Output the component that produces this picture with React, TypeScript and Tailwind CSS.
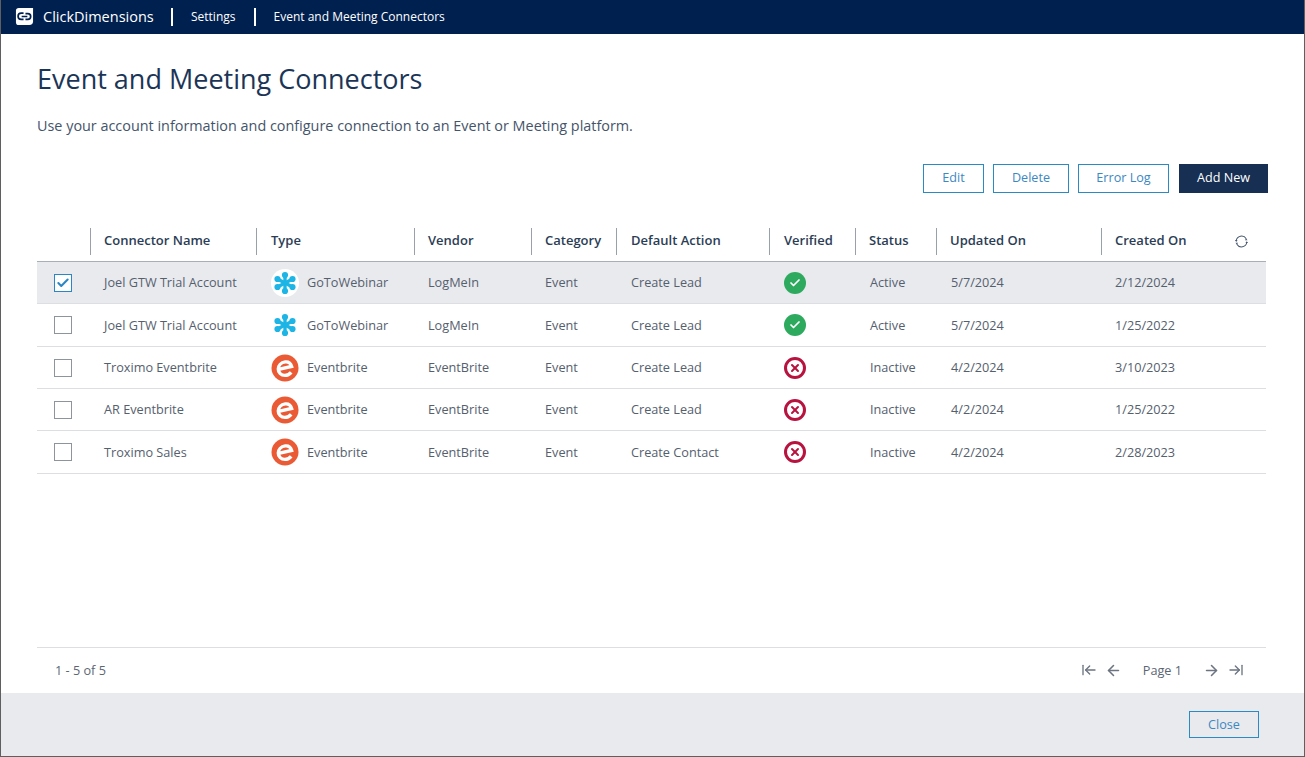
import { ArrowLeft, ArrowLeftToLine, ArrowRight, ArrowRightToLine, Check, X } from "lucide-react";

type Row = {
  name: string;
  type: "GoToWebinar" | "Eventbrite";
  vendor: string;
  action: string;
  verified: boolean;
  updated: string;
  created: string;
  selected?: boolean;
  height: string;
};

const rows: Row[] = [
  { name: "Joel GTW Trial Account", type: "GoToWebinar", vendor: "LogMeIn", action: "Create Lead", verified: true, updated: "5/7/2024", created: "2/12/2024", selected: true, height: "h-[42px]" },
  { name: "Joel GTW Trial Account", type: "GoToWebinar", vendor: "LogMeIn", action: "Create Lead", verified: true, updated: "5/7/2024", created: "1/25/2022", height: "h-[43px]" },
  { name: "Troximo Eventbrite", type: "Eventbrite", vendor: "EventBrite", action: "Create Lead", verified: false, updated: "4/2/2024", created: "3/10/2023", height: "h-[42px]" },
  { name: "AR Eventbrite", type: "Eventbrite", vendor: "EventBrite", action: "Create Lead", verified: false, updated: "4/2/2024", created: "1/25/2022", height: "h-[42px]" },
  { name: "Troximo Sales", type: "Eventbrite", vendor: "EventBrite", action: "Create Contact", verified: false, updated: "4/2/2024", created: "2/28/2023", height: "h-[43px]" },
];

const columns = "grid grid-cols-[53px_166px_158px_117px_85px_153px_86px_81px_165px_165px]";

const headers = [
  { label: "Connector Name", pad: "pl-[13px]" },
  { label: "Type", pad: "pl-[14px]" },
  { label: "Vendor", pad: "pl-[13px]" },
  { label: "Category", pad: "pl-[13px]" },
  { label: "Default Action", pad: "pl-[14px]" },
  { label: "Verified", pad: "pl-[14px]" },
  { label: "Status", pad: "pl-[13px]" },
  { label: "Updated On", pad: "pl-[13px]" },
  { label: "Created On", pad: "pl-[13px]" },
];

const GoToIcon = () => (
  <svg viewBox="0 0 28 28" className="w-7 h-7 rounded-full bg-white shrink-0">
    <g stroke="#1cb5e5" strokeWidth="3.4">
      <line x1="14" y1="6" x2="14" y2="22" />
      <line x1="6.5" y1="10" x2="21.5" y2="18" />
      <line x1="21.5" y1="10" x2="6.5" y2="18" />
    </g>
    <g fill="#1cb5e5">
      <circle cx="14" cy="6" r="3.1" />
      <circle cx="14" cy="22" r="3.1" />
      <circle cx="6.5" cy="10" r="3.1" />
      <circle cx="21.5" cy="10" r="3.1" />
      <circle cx="6.5" cy="18" r="3.1" />
      <circle cx="21.5" cy="18" r="3.1" />
    </g>
  </svg>
);

const EventbriteIcon = () => (
  <svg viewBox="0 0 28 28" className="w-7 h-7 shrink-0">
    <circle cx="14" cy="14" r="13.5" fill="#ea5a35" />
    <path d="M6.5 15.6 L20.6 12.4 C19.6 9 16.9 7.6 14.2 7.9 C10 8.4 7.4 11.5 7.3 15 C7.2 18.8 10.2 21.4 14 21.4 C16.7 21.4 18.6 20.3 20.2 18.4" fill="none" stroke="#fff" strokeWidth="3.4" />
  </svg>
);

const RefreshIcon = () => (
  <svg viewBox="0 0 16 16" className="w-[15px] h-[15px] mr-[17px] text-[#46566b]" fill="none" stroke="currentColor" strokeWidth="1.1">
    <path d="M2.3 7.2 A5.8 5.8 0 0 1 13 5" />
    <path d="M13.7 8.8 A5.8 5.8 0 0 1 3 11" />
    <path d="M11.6 6.6 H14.4 L13 4.8 Z M1 6.4 H3.8 L2.4 8.4 Z M4.4 9.4 H1.6 L3 11.2 Z M15 9.6 H12.2 L13.6 7.6 Z" fill="currentColor" stroke="none" />
  </svg>
);

const Verified = ({ ok }: { ok: boolean }) =>
  ok ? (
    <span className="w-[22px] h-[22px] rounded-full bg-[#2eaa5f] flex items-center justify-center">
      <Check className="w-3 h-3 text-white" strokeWidth={3.5} />
    </span>
  ) : (
    <span className="w-[22px] h-[22px] rounded-full border-[3px] border-[#b8123f] flex items-center justify-center">
      <X className="w-3 h-3 text-[#b8123f]" strokeWidth={4} />
    </span>
  );

const OutlineButton = ({ label, width }: { label: string; width: string }) => (
  <button className={`${width} h-[29px] pb-[1px] border border-[#2a8ac4] text-[#3b88c3] text-[12.6px] bg-white`}>{label}</button>
);

export default function App() {
  return (
    <div className="h-[757px] w-[1305px] flex flex-col bg-white border-l border-r border-b border-[#5f5f5f] font-['Open_Sans',sans-serif] overflow-hidden">
      <div className="h-[34px] shrink-0 bg-[#002050] flex items-center text-white">
        <svg viewBox="0 0 20 20" className="w-[19px] h-[19px] ml-[14px] mb-[1px]">
          <path d="M4 1 H19 V15 A4 4 0 0 1 15 19 H4 A3 3 0 0 1 1 16 V4 A3 3 0 0 1 4 1 Z" fill="#fff" />
          <path d="M9 6.5 H6.5 A3.2 3.2 0 0 0 6.5 13 H9 M11 7 H13.5 A3 3 0 0 1 13.5 13 H11 M7 10 H13" fill="none" stroke="#002050" strokeWidth="1.8" />
        </svg>
        <span className="ml-[9px] text-[14.5px] w-[111px] mb-[1px]">ClickDimensions</span>
        <span className="w-[2px] h-[18px] bg-white ml-[17px]" />
        <span className="ml-[18px] text-[12px] mb-[1px]">Settings</span>
        <span className="w-[2px] h-[18px] bg-white ml-[18px]" />
        <span className="ml-[18px] text-[12px] mb-[1px]">Event and Meeting Connectors</span>
      </div>

      <div className="flex-1 flex flex-col pl-[36px] pr-[38px] min-h-0">
        <h1 className="mt-[27px] text-[27px] leading-[36px] text-[#1b3556]">Event and Meeting Connectors</h1>
        <p className="mt-[19px] text-[14.4px] leading-[20px] text-[#44546a]">
          Use your account information and configure connection to an Event or Meeting platform.
        </p>

        <div className="mt-[28px] flex justify-end gap-[9px] -mr-[2px]">
          <OutlineButton label="Edit" width="w-[61px]" />
          <OutlineButton label="Delete" width="w-[76px]" />
          <OutlineButton label="Error Log" width="w-[91px]" />
          <button className="w-[89px] h-[29px] pb-[1px] ml-[1px] bg-[#162f52] text-white text-[12.6px]">Add New</button>
        </div>

        <div className={`${columns} mt-[27px] h-[42px] border-b border-[#a9afb8] items-center`}>
          <div />
          {headers.map((h, i) => (
            <div key={h.label} className={`h-[27px] mt-[1px] border-l border-[#98a0ab] ${h.pad} flex items-center justify-between text-[13px] font-semibold text-[#2b3d55]`}>
              {h.label}
              {i === headers.length - 1 && <RefreshIcon />}
            </div>
          ))}
        </div>

        {rows.map((r, i) => (
          <div key={i} className={`${columns} ${r.height} border-b border-[#dcdee2] items-center text-[12.7px] leading-[19px] text-[#55606e] ${r.selected ? "bg-[#e9eaee]" : ""}`}>
            <div className="pl-[17px] flex">
              {r.selected ? (
                <span className="w-[18px] h-[18px] border-[1.5px] border-[#2b86c5] bg-white flex items-center justify-center">
                  <Check className="w-[14px] h-[14px] text-[#2b86c5]" strokeWidth={3.5} />
                </span>
              ) : (
                <span className="w-[18px] h-[18px] border border-[#8e949c] bg-white" />
              )}
            </div>
            <div className="pl-[14px]">{r.name}</div>
            <div className="pl-[15px] flex items-center gap-[8px]">
              {r.type === "GoToWebinar" ? <GoToIcon /> : <EventbriteIcon />}
              {r.type}
            </div>
            <div className="pl-[14px]">{r.vendor}</div>
            <div className="pl-[14px]">Event</div>
            <div className="pl-[15px]">{r.action}</div>
            <div className="pl-[15px] flex">
              <Verified ok={r.verified} />
            </div>
            <div className="pl-[15px]">{r.verified ? "Active" : "Inactive"}</div>
            <div className="pl-[15px]">{r.updated}</div>
            <div className="pl-[14px]">{r.created}</div>
          </div>
        ))}

        <div className="mt-auto h-[46px] border-t border-[#dcdee2] flex items-center text-[12.7px] text-[#5c6673]">
          <span className="ml-[18px]">1 - 5 of 5</span>
          <div className="ml-auto flex items-center text-[#6b7480] mr-[22px]">
            <ArrowLeftToLine className="w-[16px] h-[16px]" strokeWidth={2} />
            <ArrowLeft className="w-[17px] h-[17px] ml-[8px]" strokeWidth={2.2} />
            <span className="ml-[21px] mr-[22px] mt-[1px] text-[#5c6673]">Page 1</span>
            <ArrowRight className="w-[17px] h-[17px] -ml-[1px]" strokeWidth={2.2} />
            <ArrowRightToLine className="w-[16px] h-[16px] ml-[8px]" strokeWidth={2} />
          </div>
        </div>
      </div>

      <div className="h-[63px] shrink-0 bg-[#e9eaee] flex items-center justify-end pr-[45px]">
        <button className="w-[70px] h-[27px] pt-[2px] border border-[#2a8ac4] text-[#3b88c3] text-[12.6px]">Close</button>
      </div>
    </div>
  );
}
